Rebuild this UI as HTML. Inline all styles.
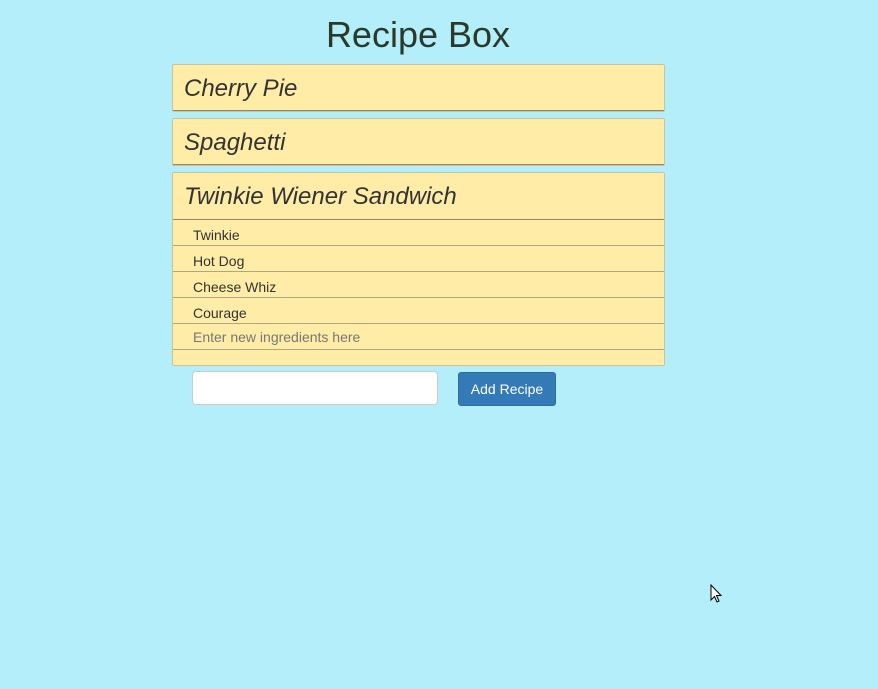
<!DOCTYPE html>
<html><head><style>
body{margin:0;background:#b3eefa;font-family:"Liberation Sans",sans-serif;color:#333;width:878px;height:689px;overflow:hidden;position:relative}
h1{position:absolute;top:15px;left:0;width:836px;text-align:center;margin:0;font-weight:400;font-size:36px;line-height:40px;color:#2a3a2a}
.card{position:absolute;left:172px;width:491px;background:#feeca7;border:1px solid #c9c4a0;border-radius:2px}
.hd{height:46px;border-bottom:1px solid #9a8466;font-style:italic;font-size:24px;line-height:48px;padding-left:11px;box-sizing:border-box}
.it{height:26px;border-bottom:1px solid #a9a98a;font-size:14px;line-height:30px;padding-left:20px;box-sizing:border-box}
input{position:absolute;left:192px;top:371px;width:246px;height:34px;box-sizing:border-box;border:1px solid #ccc;border-radius:4px;background:#fff}
.btn{position:absolute;left:458px;top:372px;width:98px;height:34px;box-sizing:border-box;background:#337ab7;border:1px solid #2e6da4;border-radius:3px;color:#fff;font-size:14px;line-height:32px;text-align:center}
</style></head><body>
<h1>Recipe Box</h1>
<div class="card" style="top:64px;height:46px"><div class="hd">Cherry Pie</div></div>
<div class="card" style="top:118px;height:46px"><div class="hd">Spaghetti</div></div>
<div class="card" style="top:172px;height:192px">
<div class="hd" style="height:47px;line-height:47px">Twinkie Wiener Sandwich</div>
<div class="it">Twinkie</div>
<div class="it">Hot Dog</div>
<div class="it">Cheese Whiz</div>
<div class="it">Courage</div>
<div class="it" style="color:#777;line-height:26px">Enter new ingredients here</div>
</div>
<input>
<div class="btn">Add Recipe</div>
<svg style="position:absolute;left:710px;top:584px" width="14" height="20" viewBox="0 0 14 20"><path d="M1 1 L1 16 L4.5 12.5 L7 18 L9 17 L6.5 11.5 L11 11.5 Z" fill="#fff" stroke="#000" stroke-width="1"/></svg>
</body></html>
